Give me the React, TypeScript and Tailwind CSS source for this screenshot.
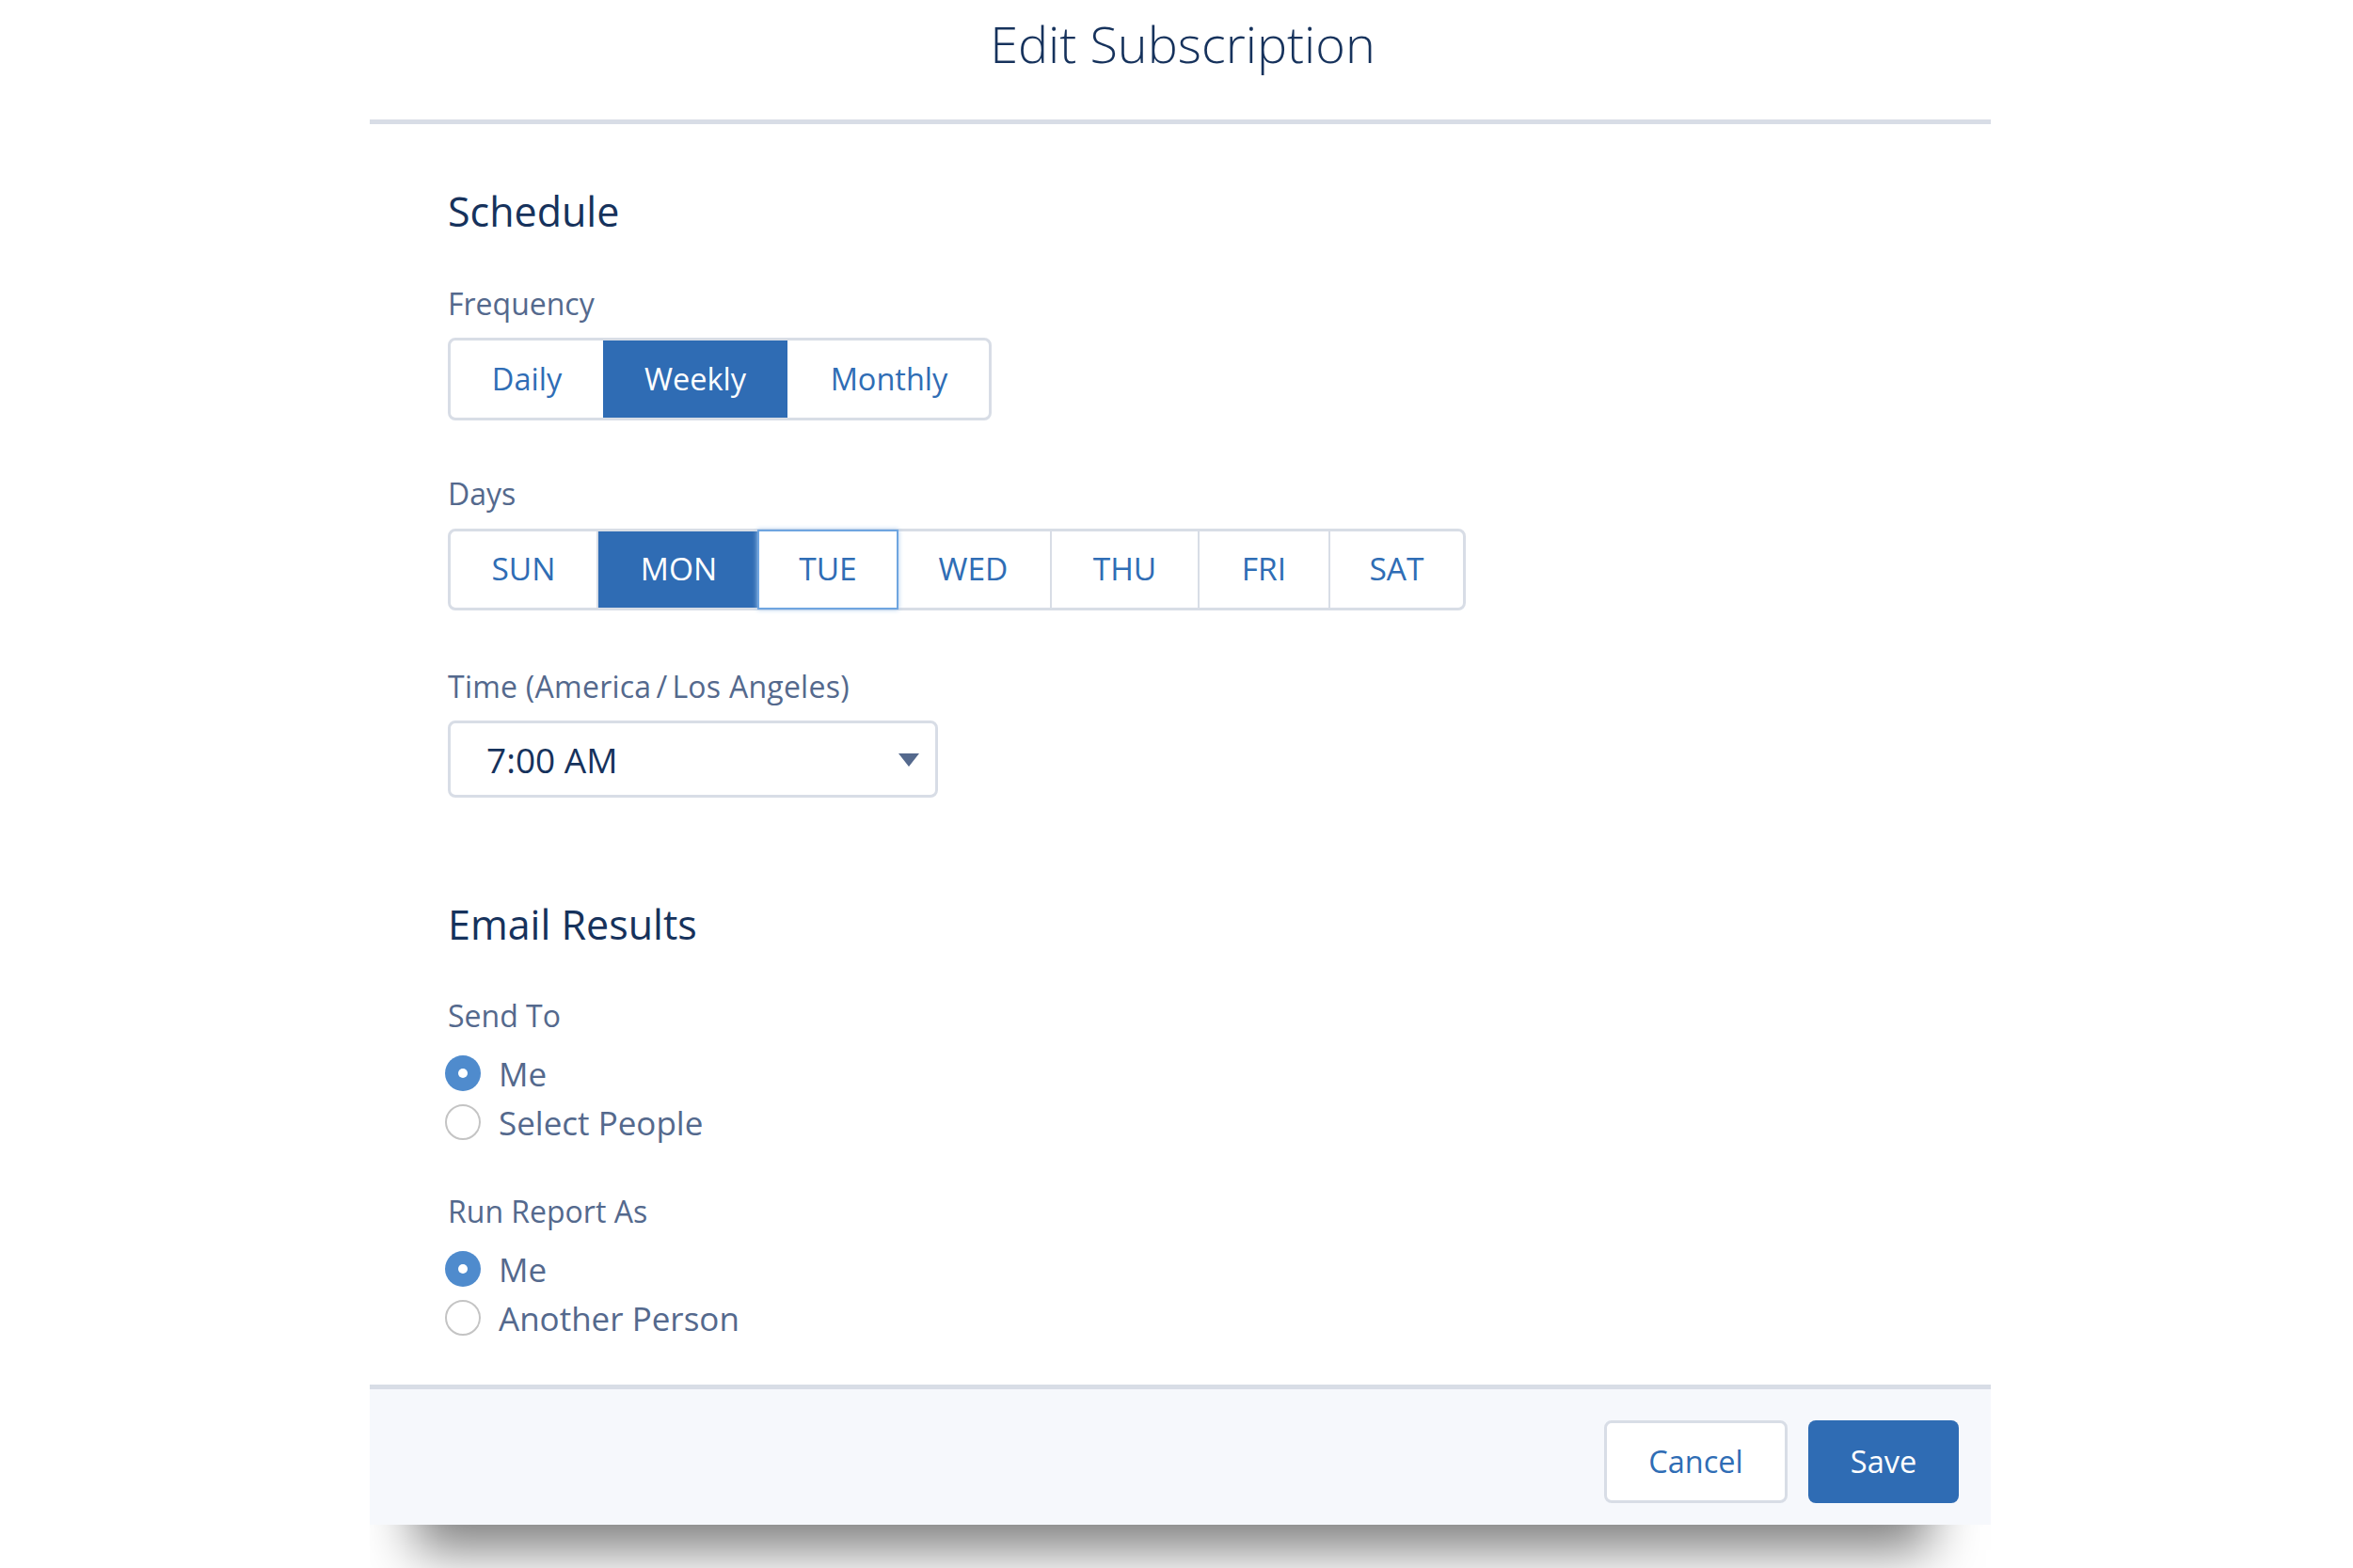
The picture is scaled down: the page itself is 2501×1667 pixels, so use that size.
import React from 'react';

const font = "font-['Open_Sans',_'Liberation_Sans',_sans-serif]";

const frequency = [
  { label: 'Daily', width: 'w-[162px] text-[32.5px]' },
  { label: 'Weekly', width: 'w-[196px] text-[32.5px]', active: true },
  { label: 'Monthly', width: 'w-[214px] pl-[2px] text-[32.5px]' },
];

const days = [
  { label: 'SUN', width: 'w-[157px] pb-[2px] text-[33.5px] border-r-2 border-[#d8dde6]' },
  { label: 'MON', width: 'w-[171px] pb-[2px] text-[33.5px]', active: true },
  { label: 'TUE', width: 'w-[146px] pb-[2px] text-[33.5px]', focus: true },
  { label: 'WED', width: 'w-[165px] pb-[2px] text-[33.5px] border-r-2 border-[#d8dde6]' },
  { label: 'THU', width: 'w-[157px] pb-[2px] text-[33.5px] border-r-2 border-[#d8dde6]' },
  { label: 'FRI', width: 'w-[139px] pb-[2px] text-[33.5px] border-r-2 border-[#d8dde6]' },
  { label: 'SAT', width: 'w-[141px] pb-[2px] text-[33.5px]' },
];

function Segment({ label, width, active, focus }: { label: string; width: string; active?: boolean; focus?: boolean }) {
  return (
    <div
      className={`flex h-full items-center justify-center font-medium ${width} ${
        active ? 'bg-[#2f6cb4] text-white' : 'text-[#2f6db5]'
      } ${focus ? 'relative bg-white shadow-[0_0_0_2px_#6fa5e0,0_0_5px_2px_#a9c9ec]' : ''}`}
    >
      {label}
    </div>
  );
}

function Radio({ label, checked }: { label: string; checked?: boolean }) {
  return (
    <div className="flex h-[52px] items-center">
      <span
        className={`-ml-[3px] flex h-[38px] w-[38px] items-center justify-center rounded-full ${
          checked ? 'bg-[#4f8bcd]' : 'border-2 border-[#c4c4c4] bg-white'
        }`}
      >
        {checked && <span className="h-[10px] w-[10px] rounded-full bg-white" />}
      </span>
      <span className="ml-[19px] pt-[2px] text-[35px] leading-[40px] text-[#54698d]">{label}</span>
    </div>
  );
}

function Label({ children, className }: { children: React.ReactNode; className: string }) {
  return <div className={`h-[40px] text-[32px] leading-[40px] text-[#54698d] ${className}`}>{children}</div>;
}

function Heading({ children, className }: { children: React.ReactNode; className: string }) {
  return <h2 className={`h-[50px] text-[43px] leading-[50px] font-medium text-[#16325c] ${className}`}>{children}</h2>;
}

export default function App() {
  return (
    <div className={`h-[1667px] w-[2501px] overflow-hidden bg-white pl-[393px] ${font}`}>
      <div className="w-[1723px]">
        <header className="flex h-[132px] items-start justify-center border-b-[5px] border-[#d8dde6] pl-[5px]">
          <h1 className="mt-[11px] text-[54px] leading-[70px] font-light text-[#16325c]">Edit Subscription</h1>
        </header>

        <main className="h-[1340px] pl-[83px]">
          <Heading className="pt-[68px] box-content">Schedule</Heading>

          <Label className="mt-[53px]">Frequency</Label>
          <div className="mt-[16px] flex h-[88px] w-fit rounded-lg border-[3px] border-[#d8dde6]">
            {frequency.map((f) => (
              <Segment key={f.label} {...f} />
            ))}
          </div>

          <Label className="mt-[58px]">Days</Label>
          <div className="mt-[17px] flex h-[87px] w-fit rounded-lg border-[3px] border-[#d8dde6]">
            {days.map((d) => (
              <Segment key={d.label} {...d} />
            ))}
          </div>

          <Label className="mt-[61px] tracking-[0.25px]">
            Time (America<span className="mx-[5px]">/</span>Los Angeles)
          </Label>
          <div className="mt-[16px] flex h-[82px] w-[521px] items-center justify-between rounded-lg border-[3px] border-[#d8dde6] pr-[17px] pl-[38px]">
            <span className="pt-[2px] text-[37px] text-[#16325c]">7:00 AM</span>
            <svg width="22" height="14" viewBox="0 0 22 14" className="mt-[1px]">
              <path d="M0 0H22L11 14Z" fill="#54698d" />
            </svg>
          </div>

          <Heading className="mt-[110px]">Email Results</Heading>

          <Label className="mt-[52px]">Send To</Label>
          <div className="mt-[15px]">
            <Radio label="Me" checked />
            <Radio label="Select People" />
          </div>

          <Label className="mt-[49px]">Run Report As</Label>
          <div className="mt-[15px]">
            <Radio label="Me" checked />
            <Radio label="Another Person" />
          </div>
        </main>

        <footer className="flex h-[149px] items-start justify-end gap-[22px] border-t-[5px] border-[#d8dde6] bg-[#f6f8fc] pt-[33px] pr-[34px]">
          <button className="h-[88px] w-[195px] rounded-lg border-[3px] border-[#d8dde6] bg-white text-[32.5px] font-medium text-[#2f6db5]">
            Cancel
          </button>
          <button className="h-[88px] w-[160px] rounded-lg bg-[#2f6cb4] text-[32.5px] font-medium text-white">Save</button>
        </footer>

        {/* shadow strip under the panel, the box itself sits above the clip */}
        <div className="h-[46px] overflow-hidden">
          <div className="mt-[-200px] ml-[48px] h-[100px] w-[1610px] shadow-[0_127px_54px_rgba(0,0,0,0.5)]" />
        </div>
      </div>
    </div>
  );
}
